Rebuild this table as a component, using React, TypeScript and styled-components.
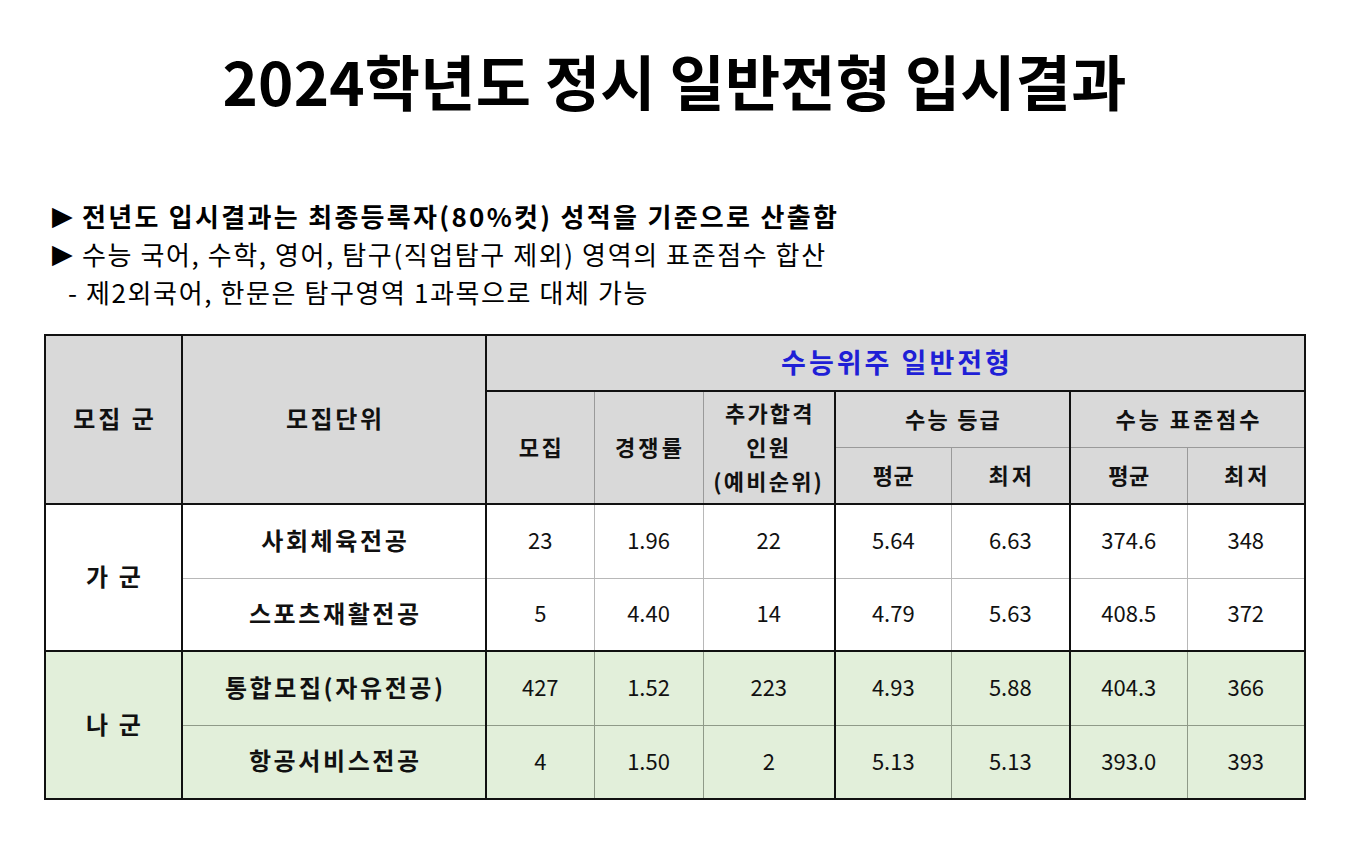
import React from "react";
import styled, { createGlobalStyle } from "styled-components";

const GlobalStyle = createGlobalStyle`
  html, body { margin: 0; padding: 0; background: #ffffff; }
  body { font-family: "Noto Sans CJK KR", "Noto Sans", sans-serif; color: #000; }
`;

const THICK = "2px solid #111";
const THIN_HEAD = "1px solid #9a9a9a";
const THIN_WHITE = "1px solid #b8b8b8";
const THIN_GREEN = "1px solid #8f9a88";

const Page = styled.div`
  width: 1347px;
  height: 841px;
  box-sizing: border-box;
  padding: 45px 0 0 0;
  display: flex;
  flex-direction: column;
`;

const Title = styled.h1`
  margin: 0;
  text-align: center;
  font-size: 60px;
  line-height: 70px;
  font-weight: 700;
  letter-spacing: 0.2px;
  padding-left: 2px;
`;

const Notes = styled.div`
  margin-top: 81px;
  padding-left: 52px;
  display: flex;
  flex-direction: column;
`;

const Note = styled.div<{ $bold?: boolean; $sub?: boolean }>`
  display: flex;
  align-items: center;
  height: 38px;
  font-size: 26px;
  font-weight: ${(p) => (p.$bold ? 700 : 400)};
  padding-left: ${(p) => (p.$sub ? "16px" : "0")};
  letter-spacing: ${(p) => (p.$bold ? 2.3 : 1.6)}px;
`;

const Arrow = styled.span`
  font-family: "DejaVu Sans", sans-serif;
  font-size: 27px;
  line-height: 1;
  width: 30px;
  flex: none;
  letter-spacing: 0;
`;

const TableWrap = styled.div`
  margin-top: 24px;
  padding-left: 44px;
`;

const Table = styled.table`
  border-collapse: collapse;
  border: ${THICK};
  width: 1260px;
  table-layout: fixed;
`;

const HeadRow = styled.tr<{ $h: number }>`
  height: ${(p) => p.$h}px;
  background: #d9d9d9;
`;

const BodyRow = styled.tr<{ $h: number; $green?: boolean }>`
  height: ${(p) => p.$h}px;
  background: ${(p) => (p.$green ? "#e2efda" : "#ffffff")};
`;

const Th = styled.th<{ $thickR?: boolean; $thickB?: boolean; $blue?: boolean; $size?: number; $ls?: number }>`
  padding: 0 0 3px 0;
  text-align: center;
  vertical-align: middle;
  font-weight: 700;
  font-size: ${(p) => p.$size ?? 22}px;
  letter-spacing: ${(p) => p.$ls ?? 2.5}px;
  text-indent: ${(p) => p.$ls ?? 2.5}px;
  line-height: 34px;
  color: ${(p) => (p.$blue ? "#1f1fd6" : "#111")};
  border: ${THIN_HEAD};
  ${(p) => (p.$thickR ? `border-right: ${THICK};` : "")}
  ${(p) => (p.$thickB ? `border-bottom: ${THICK};` : "")}
`;

const Td = styled.td<{ $thickR?: boolean; $thickB?: boolean; $green?: boolean; $label?: boolean }>`
  padding: 0 0 4px 0;
  text-align: center;
  vertical-align: middle;
  font-size: ${(p) => (p.$label ? 24 : 22)}px;
  font-weight: ${(p) => (p.$label ? 700 : 400)};
  letter-spacing: ${(p) => (p.$label ? 2.6 : 0)}px;
  text-indent: ${(p) => (p.$label ? 2.6 : 0)}px;
  color: #111;
  border: ${(p) => (p.$green ? THIN_GREEN : THIN_WHITE)};
  ${(p) => (p.$thickR ? `border-right: ${THICK};` : "")}
  ${(p) => (p.$thickB ? `border-bottom: ${THICK};` : "")}
`;

const widths = [137, 304, 108, 109, 132, 116, 119, 117, 118];

type Row = { unit: string; vals: string[] };
type Group = { name: string; green: boolean; rows: Row[]; heights: number[] };

const groups: Group[] = [
  {
    name: "가 군",
    green: false,
    heights: [74, 73],
    rows: [
      { unit: "사회체육전공", vals: ["23", "1.96", "22", "5.64", "6.63", "374.6", "348"] },
      { unit: "스포츠재활전공", vals: ["5", "4.40", "14", "4.79", "5.63", "408.5", "372"] },
    ],
  },
  {
    name: "나 군",
    green: true,
    heights: [74, 74],
    rows: [
      { unit: "통합모집(자유전공)", vals: ["427", "1.52", "223", "4.93", "5.88", "404.3", "366"] },
      { unit: "항공서비스전공", vals: ["4", "1.50", "2", "5.13", "5.13", "393.0", "393"] },
    ],
  },
];

const thickAfter = new Set([2, 4]);

export default function App() {
  return (
    <>
      <GlobalStyle />
      <Page>
        <Title>2024학년도 정시 일반전형 입시결과</Title>
        <Notes>
          <Note $bold>
            <Arrow>▶</Arrow>전년도 입시결과는 최종등록자(80%컷) 성적을 기준으로 산출함
          </Note>
          <Note>
            <Arrow>▶</Arrow>수능 국어, 수학, 영어, 탐구(직업탐구 제외) 영역의 표준점수 합산
          </Note>
          <Note $sub>- 제2외국어, 한문은 탐구영역 1과목으로 대체 가능</Note>
        </Notes>
        <TableWrap>
          <Table>
            <colgroup>
              {widths.map((w, i) => (
                <col key={i} style={{ width: w }} />
              ))}
            </colgroup>
            <thead>
              <HeadRow $h={56}>
                <Th rowSpan={3} $thickR $thickB $size={24} $ls={3}>모집 군</Th>
                <Th rowSpan={3} $thickR $thickB $size={24} $ls={2.6}>모집단위</Th>
                <Th colSpan={7} $thickB $blue $size={27} $ls={3}>수능위주 일반전형</Th>
              </HeadRow>
              <HeadRow $h={56}>
                <Th rowSpan={2} $thickB>모집</Th>
                <Th rowSpan={2} $thickB $ls={3.2}>경쟁률</Th>
                <Th rowSpan={2} $thickB $thickR $ls={2.2}>
                  추가합격
                  <br />
                  인원
                  <br />
                  (예비순위)
                </Th>
                <Th colSpan={2} $thickR $ls={2.2}>수능 등급</Th>
                <Th colSpan={2} $ls={2.9}>수능 표준점수</Th>
              </HeadRow>
              <HeadRow $h={57}>
                <Th $thickB $ls={0.6}>평균</Th>
                <Th $thickB $thickR $ls={3}>최저</Th>
                <Th $thickB $ls={0.6}>평균</Th>
                <Th $thickB $ls={3}>최저</Th>
              </HeadRow>
            </thead>
            <tbody>
              {groups.map((g, gi) =>
                g.rows.map((r, ri) => {
                  const last = ri === g.rows.length - 1 && gi < groups.length - 1;
                  return (
                    <BodyRow key={`${gi}-${ri}`} $h={g.heights[ri]} $green={g.green}>
                      {ri === 0 && (
                        <Td rowSpan={g.rows.length} $label $thickR $thickB={gi < groups.length - 1} $green={g.green}>
                          {g.name}
                        </Td>
                      )}
                      <Td $label $thickR $thickB={last} $green={g.green}>
                        {r.unit}
                      </Td>
                      {r.vals.map((v, vi) => (
                        <Td key={vi} $thickR={thickAfter.has(vi)} $thickB={last} $green={g.green}>
                          {v}
                        </Td>
                      ))}
                    </BodyRow>
                  );
                })
              )}
            </tbody>
          </Table>
        </TableWrap>
      </Page>
    </>
  );
}
